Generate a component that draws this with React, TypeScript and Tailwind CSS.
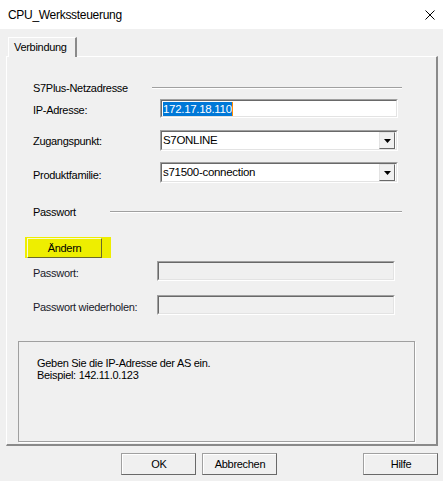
import React from "react";

const font = { fontFamily: '"Liberation Sans", Arial, sans-serif' };

function Sunken({ w, h, bg, children }: { w: string; h: string; bg: string; children?: React.ReactNode }) {
  return (
    <div className={`${w} ${h} ${bg} border-t border-l border-t-[#a0a0a0] border-l-[#a0a0a0] border-r border-b border-r-white border-b-white flex`}>
      <div className="flex-1 border-t border-l border-t-[#696969] border-l-[#696969] border-r border-b border-r-[#e3e3e3] border-b-[#e3e3e3] flex items-center">
        {children}
      </div>
    </div>
  );
}

function Select({ value }: { value: string }) {
  return (
    <Sunken w="w-[238px]" h="h-[21px]" bg="bg-white">
      <span className="flex-1 pl-[1px] text-black text-[11.5px]">{value}</span>
      <div className="w-[16px] h-[17px] mr-[1px] bg-[#f0f0f0] border-t border-l border-t-[#e3e3e3] border-l-[#e3e3e3] border-r border-b border-r-[#696969] border-b-[#696969] flex items-center justify-center">
        <svg width="7" height="4" viewBox="0 0 7 4"><path d="M0 0H7L3.5 4Z" fill="#000" /></svg>
      </div>
    </Sunken>
  );
}

function Btn({ label }: { label: string }) {
  return (
    <div className="w-[75px] h-[22px] border border-[#a0a0a0] border-r-[#696969] border-b-[#696969] bg-[#f0f0f0] flex">
      <div className="flex-1 border-t border-l border-white flex items-center justify-center text-black">{label}</div>
    </div>
  );
}

function Etched({ w }: { w: string }) {
  return <div className={`${w} h-[2px] border-t border-t-[#a0a0a0] border-b border-b-white`} />;
}

export default function App() {
  return (
    <div className="w-[443px] h-[481px] bg-[#f0f0f0] text-[11px] tracking-[-0.3px] text-black overflow-hidden" style={font}>
      <div className="h-[29px] bg-white flex items-center">
        <span className="ml-[8px] text-[12px] tracking-[-0.3px] text-black">CPU_Werkssteuerung</span>
        <svg className="ml-auto mr-[8px]" width="10" height="10" viewBox="0 0 10 10">
          <path d="M0.5 0.5L9.5 9.5M9.5 0.5L0.5 9.5" stroke="#000" strokeWidth="1" />
        </svg>
      </div>

      <div className="mt-[8px] ml-[8px] relative z-10 -mb-px w-[69px] h-[20px] bg-[#f0f0f0] border-t border-l border-white border-r-2 border-r-[#8a8a8a] flex items-center">
        <span className="ml-[5px]">Verbindung</span>
      </div>

      <div className="ml-[6px] w-[432px] h-[390px] border-t border-l border-white border-r-2 border-b-2 border-r-[#8a8a8a] border-b-[#8a8a8a] flex flex-col">
        <div className="mt-[24px] ml-[26px] h-[14px] flex items-center">
          <span className="w-[119px]">S7Plus-Netzadresse</span>
          <Etched w="w-[250px]" />
        </div>

        <div className="mt-[4px] ml-[26px] h-[19px] flex items-center">
          <span className="w-[127px] mt-[4px]">IP-Adresse:</span>
          <Sunken w="w-[238px]" h="h-[19px]" bg="bg-white">
            <span className="ml-[1px] bg-[#0078d7] text-white text-[11.5px] leading-[14px] h-[14px]">172.17.18.110</span>
            <span className="w-[1px] h-[14px] bg-[#ff8c00]" />
          </Sunken>
        </div>

        <div className="mt-[12px] ml-[26px] h-[21px] flex items-center">
          <span className="w-[127px] mt-[1px]">Zugangspunkt:</span>
          <Select value="S7ONLINE" />
        </div>

        <div className="mt-[11px] ml-[26px] h-[21px] flex items-center">
          <span className="w-[127px] mt-[6px]">Produktfamilie:</span>
          <Select value="s71500-connection" />
        </div>

        <div className="mt-[22px] ml-[26px] h-[14px] flex items-center">
          <span className="w-[77px]">Passwort</span>
          <Etched w="w-[292px]" />
        </div>

        <div className="mt-[18px] ml-[18px] w-[86px] h-[21px] bg-[#eeee00] flex items-start">
          <div className="ml-[2px] mt-[1px] w-[75px] h-[20px] border-t border-l border-t-[#fafad0] border-l-[#fafad0] border-r border-b border-r-[#6a6a2a] border-b-[#6a6a2a] flex items-center justify-center">
            <span className="text-black">Ändern</span>
          </div>
        </div>

        <div className="mt-[3px] ml-[26px] h-[20px] flex items-center">
          <span className="w-[124px] mt-[4px] text-[#1a1a2a]">Passwort:</span>
          <Sunken w="w-[238px]" h="h-[20px]" bg="bg-[#f0f0f0]" />
        </div>

        <div className="mt-[14px] ml-[26px] h-[20px] flex items-center">
          <span className="w-[124px] mt-[4px] text-[#1a1a2a]">Passwort wiederholen:</span>
          <Sunken w="w-[238px]" h="h-[20px]" bg="bg-[#f0f0f0]" />
        </div>

        <div className="mt-[26px] ml-[11px] w-[397px] h-[101px] border border-[#a0a0a0] shadow-[1px_1px_0_#ffffff] pt-[15px] pl-[18px] leading-[12px]">
          <div>Geben Sie die IP-Adresse der AS ein.</div>
          <div>Beispiel: 142.11.0.123</div>
        </div>
      </div>

      <div className="mt-[7px] pl-[121px] pr-[5px] flex">
        <Btn label="OK" />
        <div className="ml-[6px]"><Btn label="Abbrechen" /></div>
        <div className="ml-auto"><Btn label="Hilfe" /></div>
      </div>
    </div>
  );
}
